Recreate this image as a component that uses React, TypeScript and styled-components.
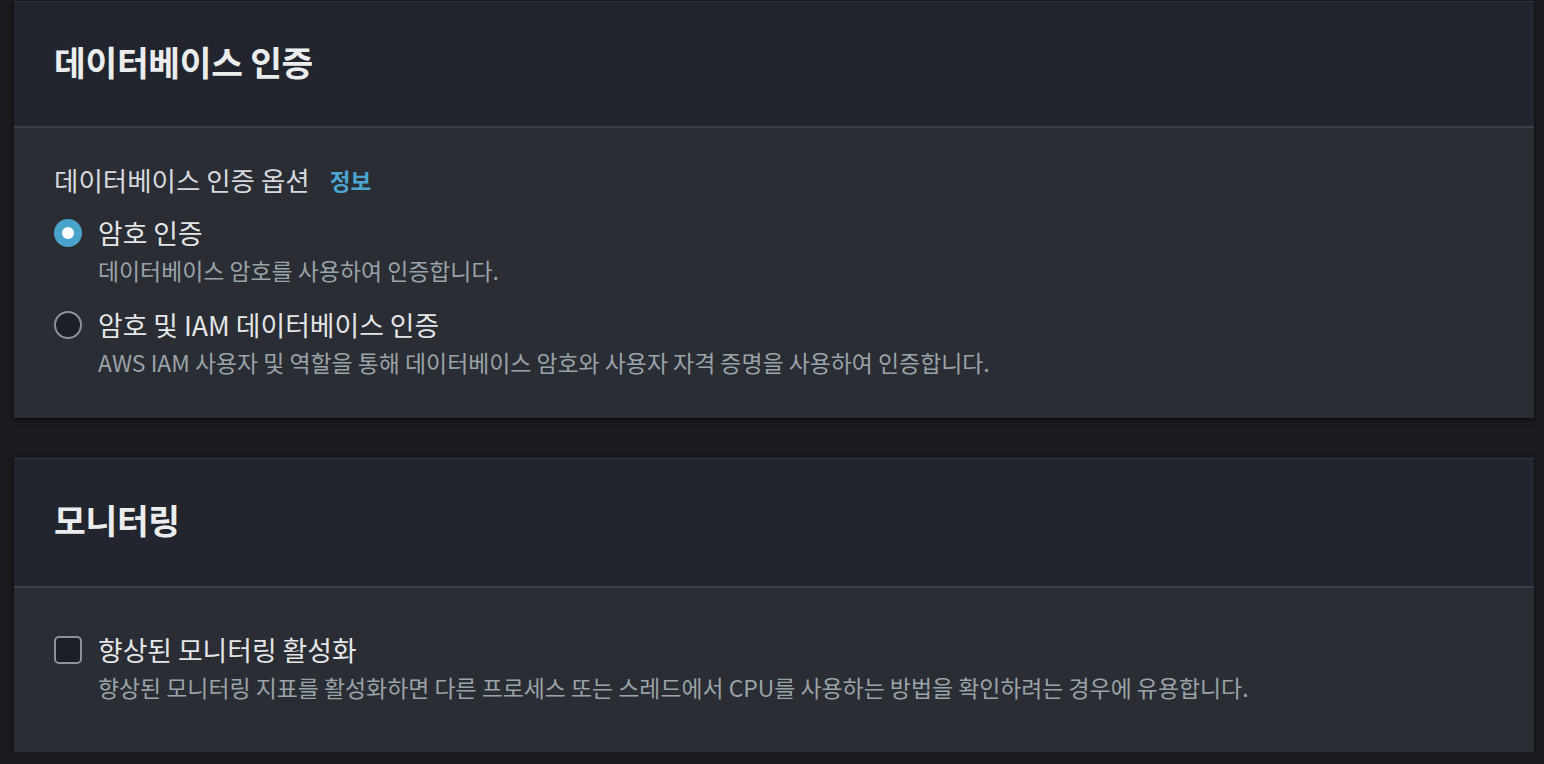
import React from "react";
import styled, { createGlobalStyle } from "styled-components";

const Global = createGlobalStyle`
  html, body { margin: 0; padding: 0; background: #1a1b1f; }
  body { font-family: "Noto Sans CJK KR", "Noto Sans", sans-serif; }
`;

const Page = styled.div`
  display: flex;
  flex-direction: column;
  gap: 40px;
  padding: 1px 10px 0 14px;
`;

const Card = styled.section`
  background: #2a2d33;
  border-top: 1px solid #33363c;
  box-shadow: 0 1px 2px rgba(0, 0, 0, 0.5), 0 2px 6px rgba(0, 0, 0, 0.25);
`;

const Header = styled.header<{ $h: number }>`
  background: #22252d;
  height: ${(p) => p.$h}px;
  box-sizing: border-box;
  border-bottom: 2px solid #3b3f46;
  display: flex;
  align-items: center;
  padding: 0 40px 7px;
`;

const Title = styled.h2`
  margin: 0;
  color: #eaeced;
  font-size: 34.5px;
  font-weight: 700;
  letter-spacing: -0.3px;
`;

const Body = styled.div<{ $pt: number; $pb: number }>`
  padding: ${(p) => p.$pt}px 40px ${(p) => p.$pb}px;
  display: flex;
  flex-direction: column;
`;

const FieldLabel = styled.div`
  color: #d5d9de;
  font-size: 26.5px;
  line-height: 34px;
  display: flex;
  align-items: center;
  gap: 20px;
  margin-bottom: 17px;
`;

const Info = styled.a`
  color: #4aa6d0;
  font-weight: 700;
  font-size: 22.5px;
  text-decoration: none;
`;

const Option = styled.label`
  display: grid;
  grid-template-columns: 28px 1fr;
  column-gap: 16px;
  align-items: start;
  & + & {
    margin-top: 18px;
  }
`;

const Control = styled.span<{ $round?: boolean; $checked?: boolean }>`
  width: 28px;
  height: 28px;
  box-sizing: border-box;
  margin-top: 5px;
  border-radius: ${(p) => (p.$round ? "50%" : "5px")};
  border: ${(p) => (p.$checked ? "none" : "2px solid #8b9399")};
  background: ${(p) => (p.$checked ? "#4aa3cb" : "#1b1f27")};
  display: flex;
  align-items: center;
  justify-content: center;
  &::after {
    content: "";
    display: ${(p) => (p.$checked ? "block" : "none")};
    width: 12px;
    height: 12px;
    border-radius: 50%;
    background: #ffffff;
  }
`;

const Texts = styled.span`
  display: flex;
  flex-direction: column;
`;

const OptionTitle = styled.span`
  color: #e4e6e8;
  font-size: 26.8px;
  line-height: 38px;
`;

const OptionDesc = styled.span`
  color: #9aa3a8;
  font-size: 22.9px;
  line-height: 36px;
`;

export default function App() {
  return (
    <>
      <Global />
      <Page>
        <Card>
          <Header $h={126}>
            <Title>데이터베이스 인증</Title>
          </Header>
          <Body $pt={35} $pb={38}>
            <FieldLabel>
              데이터베이스 인증 옵션 <Info href="#">정보</Info>
            </FieldLabel>
            <Option>
              <Control $round $checked />
              <Texts>
                <OptionTitle>암호 인증</OptionTitle>
                <OptionDesc>데이터베이스 암호를 사용하여 인증합니다.</OptionDesc>
              </Texts>
            </Option>
            <Option>
              <Control $round />
              <Texts>
                <OptionTitle>암호 및 IAM 데이터베이스 인증</OptionTitle>
                <OptionDesc>
                  AWS IAM 사용자 및 역할을 통해 데이터베이스 암호와 사용자 자격 증명을 사용하여 인증합니다.
                </OptionDesc>
              </Texts>
            </Option>
          </Body>
        </Card>
        <Card>
          <Header $h={129}>
            <Title>모니터링</Title>
          </Header>
          <Body $pt={43} $pb={47}>
            <Option>
              <Control />
              <Texts>
                <OptionTitle>향상된 모니터링 활성화</OptionTitle>
                <OptionDesc>
                  향상된 모니터링 지표를 활성화하면 다른 프로세스 또는 스레드에서 CPU를 사용하는 방법을 확인하려는 경우에 유용합니다.
                </OptionDesc>
              </Texts>
            </Option>
          </Body>
        </Card>
      </Page>
    </>
  );
}
